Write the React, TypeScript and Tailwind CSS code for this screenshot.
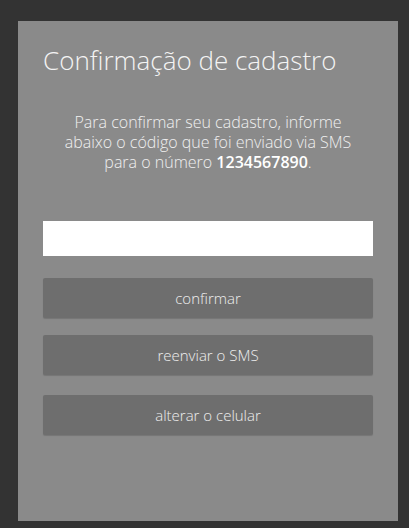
import React from "react";

export default function App() {
  return (
    <div
      className="w-[409px] h-[528px] bg-[#333333] pt-[21px] pl-[18px]"
      style={{ fontFamily: '"Open Sans", sans-serif' }}
    >
      <div className="w-[380px] h-[500px] bg-[#8a8a8a] px-[25px] pt-[21px]">
        <h1 className="text-[26px] leading-[36px] font-light text-[#f4f4f4]">
          Confirmação de cadastro
        </h1>
        <p className="mt-[34px] mx-auto w-[300px] text-center text-[16px] leading-[20px] font-light text-[#f0f0f0]">
          Para confirmar seu cadastro, informe abaixo o código que foi enviado via SMS para o número{" "}
          <span className="font-semibold text-white">1234567890</span>.
        </p>
        <input
          type="text"
          className="mt-[49px] block w-[330px] h-[35px] bg-white border-0 outline-none"
        />
        <button className="mt-[22px] block w-[330px] h-[40px] bg-[#6e6e6e] rounded-[2px] shadow-[0_1px_1px_rgba(0,0,0,0.15)] text-[15px] font-light text-[#eeeeee]">
          confirmar
        </button>
        <button className="mt-[17px] block w-[330px] h-[40px] bg-[#6e6e6e] rounded-[2px] shadow-[0_1px_1px_rgba(0,0,0,0.15)] text-[15px] font-light text-[#eeeeee]">
          reenviar o SMS
        </button>
        <button className="mt-[20px] block w-[330px] h-[40px] bg-[#6e6e6e] rounded-[2px] shadow-[0_1px_1px_rgba(0,0,0,0.15)] text-[15px] font-light text-[#eeeeee]">
          alterar o celular
        </button>
      </div>
    </div>
  );
}
